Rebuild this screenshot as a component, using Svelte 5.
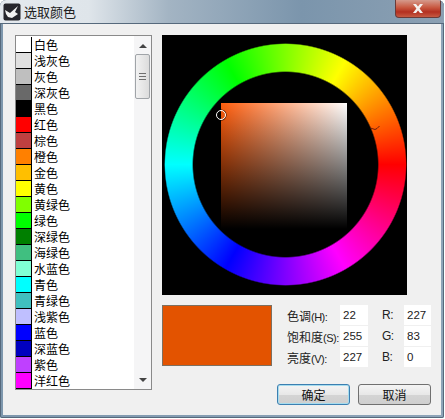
<script lang="ts">
  const colors = [
    ['白色', '#ffffff'],
    ['浅灰色', '#e0e0e0'],
    ['灰色', '#bfbfbf'],
    ['深灰色', '#696969'],
    ['黑色', '#000000'],
    ['红色', '#ff0000'],
    ['棕色', '#bf4040'],
    ['橙色', '#ff8000'],
    ['金色', '#ffbf00'],
    ['黄色', '#ffff00'],
    ['黄绿色', '#80ff00'],
    ['绿色', '#00ff00'],
    ['深绿色', '#007f00'],
    ['海绿色', '#40bf80'],
    ['水蓝色', '#80ffd4'],
    ['青色', '#00ffff'],
    ['青绿色', '#40bfbf'],
    ['浅紫色', '#bfbfff'],
    ['蓝色', '#0000ff'],
    ['深蓝色', '#0000bf'],
    ['紫色', '#bf40ff'],
    ['洋红色', '#ff00ff']
  ]

  const fields = [
    { label: '色调', key: '(H):', value: '22', rgb: 'R:', rgbValue: '227' },
    { label: '饱和度', key: '(S):', value: '255', rgb: 'G:', rgbValue: '83' },
    { label: '亮度', key: '(V):', value: '227', rgb: 'B:', rgbValue: '0' }
  ]
</script>

<div class="window">
  <header class="titlebar">
    <svg class="app-icon" viewBox="0 0 18 18" aria-hidden="true">
      <rect x="0.5" y="0.5" width="17" height="17" rx="2" fill="#26262c" />
      <path d="M2 7 L7 10 L15 3 L12 9 L15 11 L9 15 L5 14 L3 11 Z" fill="#f2f2f2" />
    </svg>
    <span class="title">选取颜色</span>
    <button type="button" class="close" aria-label="关闭">
      <svg viewBox="0 0 14 11" aria-hidden="true">
        <path d="M2 1 H5 L7 3.5 L9 1 H12 L8.6 5.5 L12 10 H9 L7 7.5 L5 10 H2 L5.4 5.5 Z" fill="#f4f0ee" />
      </svg>
    </button>
  </header>

  <div class="body">
    <div class="listbox">
      <ul class="list">
        {#each colors as [name, color]}
          <li class="row">
            <span class="swatch" style="background: {color}"></span>
            <span class="name">{name}</span>
          </li>
        {/each}
      </ul>
      <div class="scrollbar">
        <span class="arrow up"></span>
        <div class="thumb">
          <span class="grip"></span>
          <span class="grip"></span>
          <span class="grip"></span>
        </div>
        <span class="arrow down"></span>
      </div>
    </div>

    <div class="right">
      <div class="picker">
        <div class="ring"></div>
        <div class="square">
          <span class="sv-marker"></span>
        </div>
        <svg class="hue-marker" viewBox="0 0 10 6" aria-hidden="true">
          <path d="M0.5 3 L5 4.5 L7 3.5 L9.5 1" fill="none" stroke="#4a1010" stroke-width="0.8" />
        </svg>
      </div>

      <div class="values">
        <div class="preview"></div>
        <div class="fields">
          {#each fields as f}
            <span class="label"><span class="cjk">{f.label}</span>{f.key}</span>
            <span class="input">{f.value}</span>
            <span class="label rgb">{f.rgb}</span>
            <span class="input">{f.rgbValue}</span>
          {/each}
        </div>
      </div>

      <div class="actions">
        <button type="button" class="btn primary">确定</button>
        <button type="button" class="btn">取消</button>
      </div>
    </div>
  </div>
</div>

<style>
  :global(body) {
    margin: 0;
    background: #fff;
  }

  .window {
    display: flex;
    flex-direction: column;
    width: 444px;
    height: 418px;
    box-sizing: border-box;
    padding: 0 3px 3px 3px;
    border-radius: 6px 6px 2px 2px;
    background: linear-gradient(90deg, #7e97ad 0%, #8ea4b8 100%);
    box-shadow: inset 0 0 0 1px #56697c;
    overflow: hidden;
    font-family: 'Noto Sans CJK SC', 'Liberation Sans', sans-serif;
  }

  .titlebar {
    display: flex;
    align-items: center;
    flex: 0 0 23px;
    margin: 0 -3px;
    padding-left: 3px;
    border-bottom: 1px solid #56697c;
    background: linear-gradient(90deg, #e4e9ee 0%, #dfe5ea 20%, #a3b4c3 38%, #7b95ac 68%, #8ba0b3 100%);
  }

  .app-icon {
    width: 18px;
    height: 18px;
  }

  .title {
    margin-left: 3px;
    font-size: 13px;
    color: #202020;
  }

  .close {
    display: flex;
    align-items: center;
    justify-content: center;
    width: 46px;
    height: 18px;
    margin: -5px 3px 0 auto;
    padding: 0;
    border: 1px solid #6a3a38;
    border-top: 0;
    border-radius: 0 0 4px 4px;
    background: linear-gradient(180deg, #d59a8c 0%, #c8573f 45%, #b32f20 70%, #c65a42 100%);
  }

  .close svg {
    width: 14px;
    height: 11px;
  }

  .body {
    display: flex;
    align-items: flex-start;
    gap: 10px;
    flex: 1;
    background: #f0f0f0;
    padding: 11px 0 0 12px;
  }

  .listbox {
    display: flex;
    flex: none;
    width: 137px;
    height: 355px;
    box-sizing: border-box;
    border: 1px solid #8a8a8a;
    background: #fff;
  }

  .list {
    flex: 1;
    margin: 0;
    padding: 1px 0 0;
    list-style: none;
  }

  .row {
    display: flex;
    align-items: center;
    height: 16px;
  }

  .swatch {
    width: 15px;
    height: 15px;
    border-right: 1px solid #000;
    border-bottom: 1px solid #000;
  }

  .name {
    margin-left: 2px;
    font-size: 12px;
    line-height: 16px;
    color: #000;
  }

  .scrollbar {
    display: flex;
    flex-direction: column;
    align-items: center;
    width: 17px;
    background: #f5f5f6;
  }

  .arrow {
    width: 0;
    height: 0;
    border-left: 4px solid transparent;
    border-right: 4px solid transparent;
  }

  .arrow.up {
    margin-top: 8px;
    border-bottom: 4px solid #444;
  }

  .arrow.down {
    margin-top: auto;
    margin-bottom: 7px;
    border-top: 4px solid #444;
  }

  .thumb {
    display: flex;
    flex-direction: column;
    align-items: center;
    justify-content: center;
    gap: 2px;
    width: 15px;
    height: 45px;
    box-sizing: border-box;
    margin-top: 6px;
    border: 1px solid #a0a4a8;
    border-radius: 2px;
    background: linear-gradient(90deg, #f2f2f2, #dcdcdc);
  }

  .grip {
    width: 7px;
    height: 1px;
    background: #6f6f6f;
  }

  .right {
    display: flex;
    flex-direction: column;
    flex: none;
    width: 269px;
  }

  .picker {
    position: relative;
    display: grid;
    place-items: center;
    width: 245px;
    height: 260px;
    box-sizing: border-box;
    padding: 0 0 1px 1px;
    background: #000;
  }

  .ring {
    grid-area: 1 / 1;
    width: 243px;
    height: 243px;
    border-radius: 50%;
    background: conic-gradient(from 90deg, #f00, #f0f 60deg, #00f 120deg, #0ff 180deg, #0f0 240deg, #ff0 300deg, #f00);
    -webkit-mask: radial-gradient(circle closest-side, transparent 92px, #000 93.5px, #000 120px, transparent 121.5px);
    mask: radial-gradient(circle closest-side, transparent 92px, #000 93.5px, #000 120px, transparent 121.5px);
  }

  .square {
    grid-area: 1 / 1;
    position: relative;
    width: 126px;
    height: 126px;
    margin: 3px 2px 0 0;
    background:
      linear-gradient(180deg, rgba(0, 0, 0, 0) 0%, #000 100%),
      linear-gradient(90deg, #ff5d0d 0%, #ffffff 100%);
  }

  .sv-marker {
    position: absolute;
    left: -5px;
    top: 7px;
    width: 8px;
    height: 8px;
    border: 1px solid #fff;
    border-radius: 50%;
    box-shadow: 0 0 0 0.5px #000;
  }

  .hue-marker {
    position: absolute;
    left: 208px;
    top: 90px;
    width: 10px;
    height: 6px;
  }

  .values {
    display: flex;
    margin-top: 10px;
  }

  .preview {
    flex: none;
    width: 110px;
    height: 61px;
    box-sizing: border-box;
    border: 1px solid #7d7060;
    background: #e35300;
  }

  .fields {
    display: grid;
    grid-template-columns: 53px 28px 36px 27px;
    grid-auto-rows: 20px;
    gap: 1px 0;
    margin-left: 15px;
    align-items: center;
  }

  .label {
    font-size: 11px;
    letter-spacing: -0.5px;
    white-space: nowrap;
    color: #222;
    font-family: 'Liberation Sans', sans-serif;
  }

  .label .cjk {
    font-size: 12px;
    font-family: 'Noto Sans CJK SC', sans-serif;
    letter-spacing: 0;
  }

  .label.rgb {
    padding-left: 14px;
    font-size: 12px;
  }

  .input {
    height: 20px;
    padding-left: 3px;
    box-sizing: border-box;
    background: #fff;
    font-size: 11.5px;
    line-height: 20px;
    color: #222;
    font-family: 'Liberation Sans', sans-serif;
  }

  .actions {
    display: flex;
    justify-content: flex-end;
    gap: 8px;
    margin-top: 17px;
  }

  .btn {
    width: 73px;
    height: 21px;
    padding: 0;
    border: 1px solid #707070;
    border-radius: 3px;
    background: linear-gradient(180deg, #f4f4f4 0%, #e8e8e8 50%, #d4d4d4 52%, #cfcfcf 100%);
    font-family: inherit;
    font-size: 12px;
    line-height: 1;
    color: #111;
  }

  .btn.primary {
    border-color: #3c7fb1;
    box-shadow: inset 0 0 0 1px #a6dcee;
  }
</style>
